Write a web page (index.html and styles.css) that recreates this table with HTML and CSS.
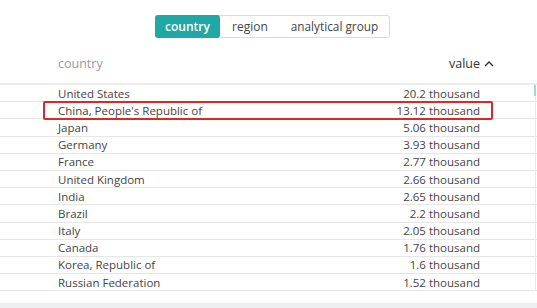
FILE: index.html
```html
<!DOCTYPE html>
<html>
<head>
<meta charset="utf-8">
<link rel="stylesheet" href="styles.css">
</head>
<body>
<div class="page">
  <div class="tabs-wrap">
    <div class="tabs">
      <span class="tab active">country</span>
      <span class="tab">region</span>
      <span class="tab">analytical group</span>
    </div>
  </div>
  <div class="head">
    <span class="h-country">country</span>
    <span class="h-value">value <svg class="chev" width="10" height="7" viewBox="0 0 10 7"><path d="M1 6 L5 2 L9 6" fill="none" stroke="#333" stroke-width="1.4"/></svg></span>
  </div>
  <div class="table">
    <div class="row"><span>United States</span><span>20.2 thousand</span></div>
    <div class="row hl"><span>China, People's Republic of</span><span>13.12 thousand</span></div>
    <div class="row"><span>Japan</span><span>5.06 thousand</span></div>
    <div class="row"><span>Germany</span><span>3.93 thousand</span></div>
    <div class="row"><span>France</span><span>2.77 thousand</span></div>
    <div class="row"><span>United Kingdom</span><span>2.66 thousand</span></div>
    <div class="row"><span>India</span><span>2.65 thousand</span></div>
    <div class="row"><span>Brazil</span><span>2.2 thousand</span></div>
    <div class="row"><span>Italy</span><span>2.05 thousand</span></div>
    <div class="row"><span>Canada</span><span>1.76 thousand</span></div>
    <div class="row"><span>Korea, Republic of</span><span>1.6 thousand</span></div>
    <div class="row"><span>Russian Federation</span><span>1.52 thousand</span></div>
  </div>
  <div class="footer-band"></div>
</div>
</body>
</html>
```
FILE: styles.css
```css
html, body {
  margin: 0;
  padding: 0;
  background: #fff;
}
body {
  font-family: "Open Sans", "Liberation Sans", sans-serif;
  color: #444;
  width: 537px;
  height: 308px;
  overflow: hidden;
}
.page {
  display: flex;
  flex-direction: column;
  height: 308px;
}
.tabs-wrap {
  display: flex;
  padding: 15px 0 0 155px;
}
.tabs {
  display: flex;
  border: 1px solid #dcdcdc;
  border-radius: 3px;
  height: 21px;
  width: 233px;
  font-size: 12px;
  color: #444;
}
.tab {
  display: flex;
  align-items: center;
  justify-content: center;
  line-height: 21px;
}
.tab.active {
  background: #1fa8a4;
  color: #fff;
  border-radius: 3px;
  width: 65px;
  margin: -1px 0 -1px -1px;
  height: 23px;
  font-weight: 600;
}
.tab:nth-child(2) {
  width: 60px;
}
.tab:nth-child(3) {
  width: 109px;
  font-size: 11.8px;
}
.head {
  display: flex;
  justify-content: space-between;
  align-items: center;
  box-sizing: border-box;
  height: 45px;
  padding: 6px 43px 0 58px;
  font-size: 12.5px;
}
.h-country {
  color: #9a9a9a;
}
.h-value {
  color: #333;
  display: flex;
  align-items: center;
  gap: 4px;
}
.chev {
  display: block;
  margin-top: -1px;
}
.table {
  position: relative;
  border-top: 2px solid #ececec;
}
.table::before {
  content: "";
  position: absolute;
  right: 1px;
  top: 0;
  width: 2px;
  height: 11px;
  background: #9fd8d5;
}
.table::after {
  content: "";
  position: absolute;
  right: 1px;
  top: 11px;
  bottom: 0;
  width: 1px;
  background: #e8e8e8;
}
.row {
  position: relative;
  display: flex;
  justify-content: space-between;
  align-items: center;
  height: 16.2px;
  border-bottom: 1px solid #e6e6e6;
  padding: 0 57px 0 58px;
  font-size: 11.5px;
  color: #444;
}
.row.hl::after {
  content: "";
  position: absolute;
  left: 43px;
  top: -1px;
  width: 450px;
  height: 19px;
  border: 2px solid #d52b2b;
  border-radius: 2px;
  box-sizing: border-box;
}
.footer-band {
  margin-top: auto;
  height: 5px;
  background: #eeeff1;
}
```
